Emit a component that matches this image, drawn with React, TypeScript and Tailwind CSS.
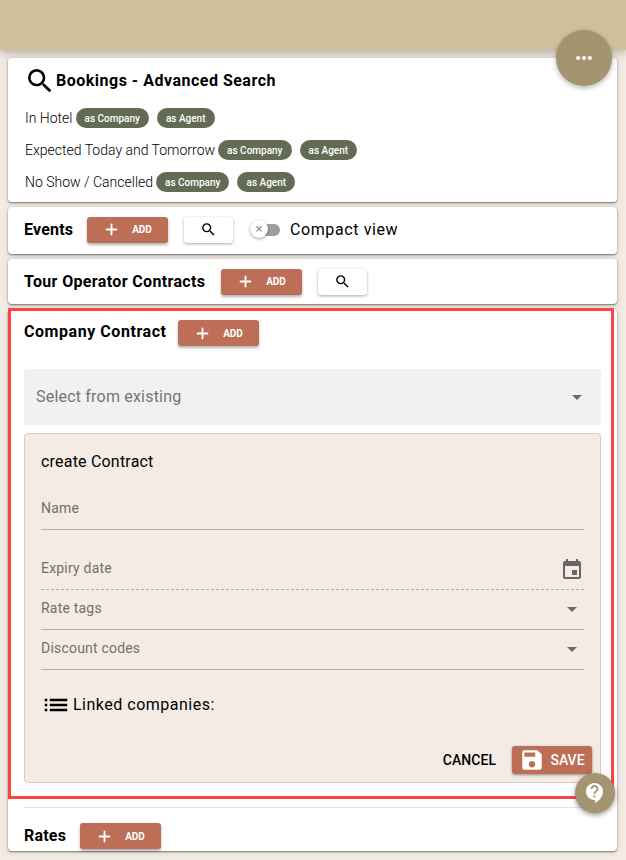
import { MoreHorizontal, Plus } from "lucide-react";
import { MdContactSupport, MdEvent, MdList, MdSave, MdSearch } from "react-icons/md";

const cardShadow = "shadow-[0_1px_2px_rgba(0,0,0,0.5),0_0_8px_rgba(0,0,0,0.1)]";

const AddButton = () => (
  <button className="flex h-[26px] w-[81px] items-center justify-center gap-3 rounded-[3px] bg-[#bc6e56] text-white shadow-[0_2px_3px_rgba(0,0,0,0.3)]">
    <Plus size={17} strokeWidth={2.6} />
    <span className="text-[10px] font-bold tracking-normal">ADD</span>
  </button>
);

const SearchButton = () => (
  <button className="flex h-[26px] w-[49px] items-center justify-center rounded-[3px] bg-white shadow-[0_1px_3px_rgba(0,0,0,0.35)]">
    <MdSearch size={17} className="text-black" />
  </button>
);

const Chip = ({ label }: { label: string }) => (
  <span className="flex h-5 items-center rounded-full bg-[#636b55] px-[9px] text-[10px] font-medium tracking-normal text-white">
    {label}
  </span>
);

const SearchRow = ({ label }: { label: string }) => (
  <div className="flex h-5 items-center">
    <span className="mr-[3px] text-sm font-light tracking-normal text-black">{label}</span>
    <div className="flex gap-2">
      <Chip label="as Company" />
      <Chip label="as Agent" />
    </div>
  </div>
);

const Caret = () => <span className="h-0 w-0 border-x-[5px] border-t-[5px] border-x-transparent border-t-[#6f6a66]" />;

const Field = ({ label }: { label: string }) => (
  <div className="flex h-10 items-center justify-between border-b border-[#b8aea5] pr-[7px]">
    <span className="mb-1 text-sm text-[#736f6c]">{label}</span>
    <Caret />
  </div>
);

export default function App() {
  return (
    <div className="relative h-[860px] w-[626px] overflow-hidden bg-[#f4ece4] font-['Roboto',sans-serif] tracking-[0.2px]">
      <div className="h-[50px] bg-[#cfbf9a] shadow-[0_3px_8px_rgba(0,0,0,0.25)]" />

      <div className="flex w-[617px] flex-col gap-[5px] pl-[8px] pt-2">
        <section className={`h-[144px] rounded bg-white pl-[17px] ${cardShadow}`}>
          <div className="flex h-[45px] items-center">
            <MdSearch size={32} className="ml-[-1px] text-black" />
            <h1 className="text-base font-bold tracking-[0.5px] text-black">Bookings - Advanced Search</h1>
          </div>
          <div className="mt-[5px] flex flex-col gap-3">
            <SearchRow label="In Hotel" />
            <SearchRow label="Expected Today and Tomorrow" />
            <SearchRow label="No Show / Cancelled" />
          </div>
        </section>

        <section className={`flex h-[47px] items-center rounded bg-white pb-[2px] pl-4 ${cardShadow}`}>
          <h2 className="w-[63px] text-base font-bold text-black">Events</h2>
          <AddButton />
          <div className="ml-4">
            <SearchButton />
          </div>
          <div className="relative ml-[17px] h-5 w-[30px]">
            <div className="absolute left-[6px] top-[4px] h-3 w-[24px] rounded-full bg-[#9e9e9e]" />
            <div className="absolute left-0 top-0 flex h-[18px] w-[18px] items-center justify-center rounded-full bg-white text-[13px] leading-none text-[#8d8d8d] shadow-[0_1px_3px_rgba(0,0,0,0.4)]">
              ×
            </div>
          </div>
          <span className="ml-[10px] text-base tracking-[0.6px] text-black">Compact view</span>
        </section>

        <section className={`flex h-[45px] items-center rounded bg-white pl-4 ${cardShadow}`}>
          <h2 className="w-[197px] text-base font-bold tracking-[0.35px] text-black">Tour Operator Contracts</h2>
          <AddButton />
          <div className="ml-4">
            <SearchButton />
          </div>
        </section>

        <section className={`h-[542px] rounded bg-white px-4 ${cardShadow}`}>
          <div className="flex h-[48px] items-center">
            <h2 className="w-[154px] pb-[2px] text-base font-bold tracking-[0.55px] text-black">Company Contract</h2>
            <AddButton />
          </div>

          <div className="mt-3 flex h-14 items-center justify-between rounded-t bg-[#f1f1f1] pl-3 pr-[19px]">
            <span className="text-base text-[#757575]">Select from existing</span>
            <Caret />
          </div>

          <div className="mt-2 h-[350px] rounded border border-[#d6cdc4] bg-[#f4ece4] px-4">
            <h3 className="pt-[18px] text-base leading-[20px] text-black">create Contract</h3>

            <div className="mt-[18px] flex h-10 items-center border-b border-[#b8aea5] pb-1">
              <span className="text-sm text-[#736f6c]">Name</span>
            </div>

            <div className="mt-[19px] flex h-[41px] items-center justify-between border-b border-dashed border-[#b8aea5]">
              <span className="mb-[3px] text-sm text-[#736f6c]">Expiry date</span>
              <MdEvent size={24} className="mt-[2px] text-[#6b6664]" />
            </div>

            <Field label="Rate tags" />
            <Field label="Discount codes" />

            <div className="mt-5 flex h-[30px] items-center">
              <MdList size={30} className="text-black" />
              <span className="ml-[2px] text-base tracking-[0.5px] text-black">Linked companies:</span>
            </div>

            <div className="mr-[-8px] mt-[26px] flex items-center justify-end">
              <span className="mr-4 text-sm font-medium tracking-[0.05px] text-black">CANCEL</span>
              <button className="flex h-7 w-20 items-center justify-center gap-[5px] rounded-[3px] bg-[#bc6e56] text-sm font-medium tracking-normal text-white shadow-[0_1px_3px_rgba(0,0,0,0.4)]">
                <MdSave size={26} />
                SAVE
              </button>
            </div>
          </div>

          <div className="mt-6 h-px bg-[#e3e3e3]" />

          <div className="flex h-[43px] items-center pt-[13px]">
            <h2 className="w-[56px] text-base font-bold text-black">Rates</h2>
            <AddButton />
          </div>
        </section>
      </div>

      <button className="absolute left-[556px] top-[30px] flex h-14 w-14 items-center justify-center rounded-full bg-[#a59470] text-white shadow-[0_2px_5px_rgba(0,0,0,0.3)]">
        <MoreHorizontal size={20} strokeWidth={3} />
      </button>

      <div className="pointer-events-none absolute left-[8px] top-[308px] h-[491px] w-[606px] border-[3px] border-[#fb4444]" />

      <button className="absolute left-[575px] top-[773px] flex h-10 w-10 items-center justify-center rounded-full bg-[#a59470] text-white shadow-[0_2px_5px_rgba(0,0,0,0.4)]">
        <MdContactSupport size={24} />
      </button>
    </div>
  );
}
